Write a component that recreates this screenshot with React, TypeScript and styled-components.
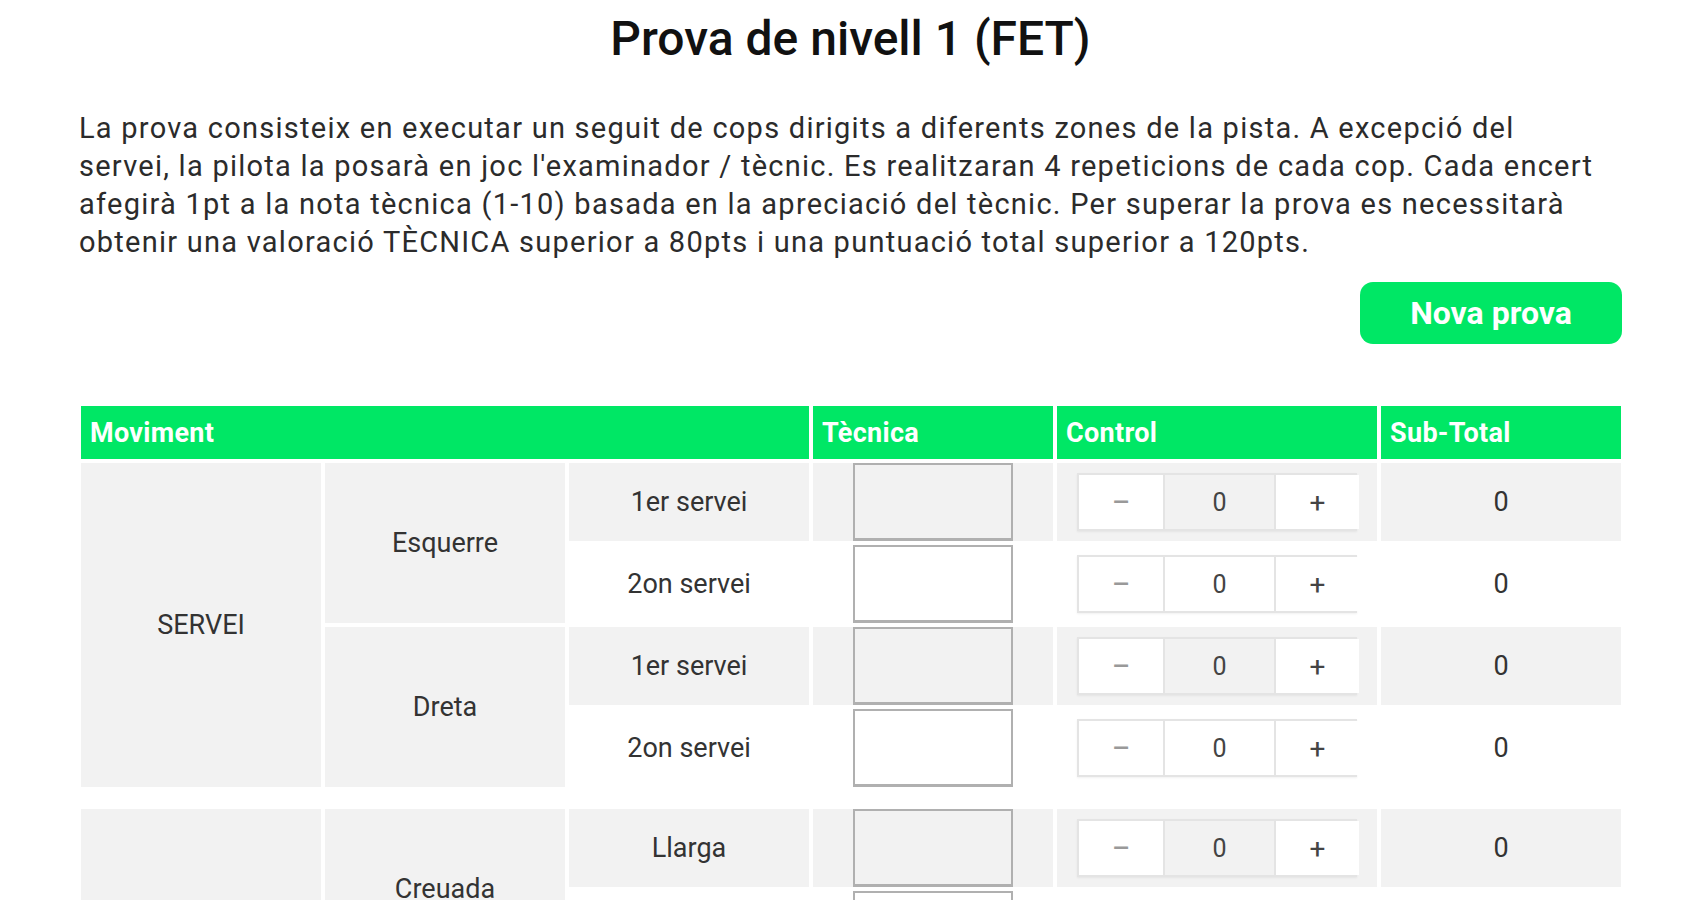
import { useState } from "react";
import styled, { createGlobalStyle } from "styled-components";

const green = "#00e765";
const rowGray = "#f2f2f2";

const GlobalStyle = createGlobalStyle`
  body {
    margin: 0;
    background: #fff;
    font-family: Roboto, "Liberation Sans", Arial, sans-serif;
    color: #333;
  }
`;

const Page = styled.div`
  padding: 0 78px 40px 79px;
`;

const Title = styled.h1`
  margin: 10px 0 0;
  text-align: center;
  font-size: 48px;
  font-weight: 500;
  color: #111;
`;

const Intro = styled.p`
  margin: 42px 0 0;
  padding-right: 16px;
  font-size: 29px;
  letter-spacing: 1.25px;
  line-height: 38px;
  color: #2b2b2b;
`;

const Actions = styled.div`
  display: flex;
  justify-content: flex-end;
  margin-top: 21px;
`;

const PrimaryButton = styled.button`
  width: 262px;
  height: 62px;
  border: none;
  border-radius: 13px;
  background: ${green};
  color: #fff;
  font-family: inherit;
  font-size: 32px;
  font-weight: 700;
  cursor: pointer;
`;

const Table = styled.table`
  margin: 58px 0 0 -2px;
  width: calc(100% + 4px);
  table-layout: fixed;
  border-collapse: separate;
  border-spacing: 4px;
  font-size: 27px;
`;

const HeadCell = styled.th`
  background: ${green};
  color: #fff;
  text-align: left;
  font-weight: 700;
  letter-spacing: 0.3px;
  padding: 0 9px;
  height: 53px;
`;

const Cell = styled.td<{ $shade?: boolean }>`
  background: ${({ $shade }) => ($shade ? rowGray : "#fff")};
  text-align: center;
  height: 78px;
  padding: 0;
  color: #333;
`;

const Spacer = styled.tr`
  height: 14px;
`;

const TechInput = styled.input`
  box-sizing: border-box;
  display: block;
  margin: 0 auto;
  width: 160px;
  height: 78px;
  border: 2px solid #b0b0b0;
  border-bottom-width: 3px;
  background: transparent;
  font-family: inherit;
  font-size: 26px;
  text-align: center;
  outline: none;
`;

const StepperBox = styled.div`
  display: grid;
  grid-template-columns: 84px 113px 83px;
  width: 280px;
  height: 58px;
  margin: 0 auto;
  box-sizing: border-box;
  border: 2px solid #e4e4e4;
  box-shadow: 0 1px 2px rgba(0, 0, 0, 0.06);
`;

const StepButton = styled.button<{ $wide?: boolean }>`
  border: none;
  background: #fff;
  font-family: inherit;
  font-size: ${({ $wide }) => ($wide ? "34px" : "28px")};
  color: #444;
  cursor: pointer;
  padding: 0;

  &:disabled {
    color: #999;
    cursor: default;
  }
`;

const StepValue = styled.div`
  display: flex;
  align-items: center;
  justify-content: center;
  border-left: 2px solid #e4e4e4;
  border-right: 2px solid #e4e4e4;
  font-size: 25px;
  color: #444;
`;

type Row = { group?: string; groupSpan?: number; side?: string; sideSpan?: number; shot: string };

const sections: Row[][] = [
  [
    { group: "SERVEI", groupSpan: 4, side: "Esquerre", sideSpan: 2, shot: "1er servei" },
    { shot: "2on servei" },
    { side: "Dreta", sideSpan: 2, shot: "1er servei" },
    { shot: "2on servei" },
  ],
  [
    { group: "DRET", groupSpan: 4, side: "Creuada", sideSpan: 2, shot: "Llarga" },
    { shot: "Curta" },
    { side: "Paral·lela", sideSpan: 2, shot: "Llarga" },
    { shot: "Curta" },
  ],
];

const Stepper = ({ value, onChange }: { value: number; onChange: (v: number) => void }) => (
  <StepperBox>
    <StepButton $wide disabled={value <= 0} onClick={() => onChange(value - 1)}>
      −
    </StepButton>
    <StepValue>{value}</StepValue>
    <StepButton disabled={value >= 4} onClick={() => onChange(value + 1)}>
      +
    </StepButton>
  </StepperBox>
);

const App = () => {
  const total = sections.reduce((n, s) => n + s.length, 0);
  const [control, setControl] = useState<number[]>(Array(total).fill(0));
  const [tech, setTech] = useState<string[]>(Array(total).fill(""));

  const reset = () => {
    setControl(Array(total).fill(0));
    setTech(Array(total).fill(""));
  };

  let index = 0;

  return (
    <>
      <GlobalStyle />
      <Page>
        <Title>Prova de nivell 1 (FET)</Title>
        <Intro>
          La prova consisteix en executar un seguit de cops dirigits a diferents zones de la
          pista. A excepció del servei, la pilota la posarà en joc l'examinador / tècnic. Es
          realitzaran 4 repeticions de cada cop. Cada encert afegirà 1pt a la nota tècnica (1-10)
          basada en la apreciació del tècnic. Per superar la prova es necessitarà obtenir una
          valoració TÈCNICA superior a 80pts i una puntuació total superior a 120pts.
        </Intro>
        <Actions>
          <PrimaryButton onClick={reset}>Nova prova</PrimaryButton>
        </Actions>
        <Table>
          <colgroup>
            <col style={{ width: 240 }} />
            <col style={{ width: 240 }} />
            <col style={{ width: 240 }} />
            <col style={{ width: 240 }} />
            <col style={{ width: 320 }} />
            <col style={{ width: 240 }} />
          </colgroup>
          <thead>
            <tr>
              <HeadCell colSpan={3}>Moviment</HeadCell>
              <HeadCell>Tècnica</HeadCell>
              <HeadCell>Control</HeadCell>
              <HeadCell>Sub-Total</HeadCell>
            </tr>
          </thead>
          <tbody>
            {sections.map((rows, s) => [
              s > 0 && <Spacer key={`sp-${s}`} />,
              ...rows.map((row, r) => {
                const i = index++;
                const shade = r % 2 === 0;
                const points = (parseInt(tech[i], 10) || 0) + control[i];
                return (
                  <tr key={`${s}-${r}`}>
                    {row.group && (
                      <Cell $shade rowSpan={row.groupSpan}>
                        {row.group}
                      </Cell>
                    )}
                    {row.side && (
                      <Cell $shade rowSpan={row.sideSpan}>
                        {row.side}
                      </Cell>
                    )}
                    <Cell $shade={shade}>{row.shot}</Cell>
                    <Cell $shade={shade}>
                      <TechInput
                        value={tech[i]}
                        onChange={(e) => {
                          const next = [...tech];
                          next[i] = e.target.value;
                          setTech(next);
                        }}
                      />
                    </Cell>
                    <Cell $shade={shade}>
                      <Stepper
                        value={control[i]}
                        onChange={(v) => {
                          const next = [...control];
                          next[i] = v;
                          setControl(next);
                        }}
                      />
                    </Cell>
                    <Cell $shade={shade}>{points}</Cell>
                  </tr>
                );
              }),
            ])}
          </tbody>
        </Table>
      </Page>
    </>
  );
};

export default App;
